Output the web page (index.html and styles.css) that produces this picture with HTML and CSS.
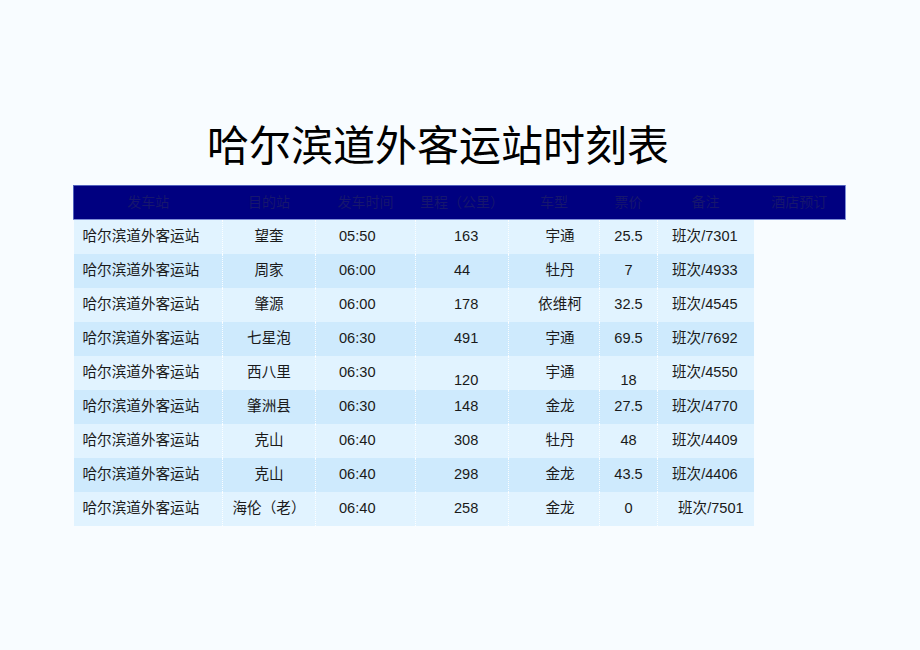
FILE: index.html
```html
<!DOCTYPE html>
<html lang="zh-CN">
<head>
<meta charset="utf-8">
<title>哈尔滨道外客运站时刻表</title>
<link rel="stylesheet" href="styles.css">
</head>
<body>
<div class="page">
  <h1 class="title">哈尔滨道外客运站时刻表</h1>
  <table class="schedule">
    <colgroup>
      <col class="c1"><col class="c2"><col class="c3"><col class="c4">
      <col class="c5"><col class="c6"><col class="c7"><col class="c8">
    </colgroup>
    <thead>
      <tr class="head">
        <th>发车站</th><th>目的站</th><th>发车时间</th><th>里程（公里）</th>
        <th>车型</th><th>票价</th><th>备注</th><th>酒店预订</th>
      </tr>
    </thead>
    <tbody>
      <tr class="odd"><td class="from">哈尔滨道外客运站</td><td class="to">望奎</td><td class="time">05:50</td><td class="km">163</td><td class="bus">宇通</td><td class="price">25.5</td><td class="note">班次/7301</td><td class="blank"></td></tr>
      <tr class="even"><td class="from">哈尔滨道外客运站</td><td class="to">周家</td><td class="time">06:00</td><td class="km">44</td><td class="bus">牡丹</td><td class="price">7</td><td class="note">班次/4933</td><td class="blank"></td></tr>
      <tr class="odd"><td class="from">哈尔滨道外客运站</td><td class="to">肇源</td><td class="time">06:00</td><td class="km">178</td><td class="bus">依维柯</td><td class="price">32.5</td><td class="note">班次/4545</td><td class="blank"></td></tr>
      <tr class="even"><td class="from">哈尔滨道外客运站</td><td class="to">七星泡</td><td class="time">06:30</td><td class="km">491</td><td class="bus">宇通</td><td class="price">69.5</td><td class="note">班次/7692</td><td class="blank"></td></tr>
      <tr class="odd"><td class="from">哈尔滨道外客运站</td><td class="to">西八里</td><td class="time">06:30</td><td class="km low">120</td><td class="bus">宇通</td><td class="price low">18</td><td class="note">班次/4550</td><td class="blank"></td></tr>
      <tr class="even"><td class="from">哈尔滨道外客运站</td><td class="to">肇洲县</td><td class="time">06:30</td><td class="km">148</td><td class="bus">金龙</td><td class="price">27.5</td><td class="note">班次/4770</td><td class="blank"></td></tr>
      <tr class="odd"><td class="from">哈尔滨道外客运站</td><td class="to">克山</td><td class="time">06:40</td><td class="km">308</td><td class="bus">牡丹</td><td class="price">48</td><td class="note">班次/4409</td><td class="blank"></td></tr>
      <tr class="even"><td class="from">哈尔滨道外客运站</td><td class="to">克山</td><td class="time">06:40</td><td class="km">298</td><td class="bus">金龙</td><td class="price">43.5</td><td class="note">班次/4406</td><td class="blank"></td></tr>
      <tr class="odd"><td class="from">哈尔滨道外客运站</td><td class="to">海伦（老）</td><td class="time">06:40</td><td class="km">258</td><td class="bus">金龙</td><td class="price">0</td><td class="note shift">班次/7501</td><td class="blank"></td></tr>
    </tbody>
  </table>
</div>
</body>
</html>
```
FILE: styles.css
```css
html, body {
  margin: 0;
  padding: 0;
  background: #f8fcff;
}
body {
  width: 920px;
  height: 650px;
  overflow: hidden;
  font-family: "Liberation Sans", "Noto Sans CJK SC", sans-serif;
  color: #1a1a1a;
}
.page {
  padding: 118px 0 0 73px;
}
.title {
  margin: 0 0 17px 134px;
  height: 50px;
  line-height: 50px;
  font-size: 42px;
  font-weight: normal;
  font-family: "Noto Sans CJK SC", sans-serif;
  color: #000;
}
.schedule {
  border-collapse: collapse;
  table-layout: fixed;
  width: 772px;
}
.c1 { width: 149px; }
.c2 { width: 93px; }
.c3 { width: 100px; }
.c4 { width: 93px; }
.c5 { width: 91px; }
.c6 { width: 58px; }
.c7 { width: 96px; }
.c8 { width: 92px; }

.head th {
  height: 33px;
  padding: 0;
  background: #000080;
  color: #16166e;
  font-family: "Liberation Serif", "Noto Sans CJK SC", serif;
  font-weight: normal;
  font-size: 14px;
  line-height: 18px;
  text-align: center;
  border-top: 1px solid #5262bd;
  border-bottom: 1px solid #7f8fd6;
}
.head th:first-child { border-left: 1px solid #5262bd; }
.head th:last-child { border-right: 1px solid #7f8fd6; }

tbody tr { height: 34px; }
tbody td {
  height: 34px;
  box-sizing: border-box;
  padding: 0 0 2px 0;
  font-size: 14.6px;
  line-height: 18px;
  white-space: nowrap;
  border-right: 1px dotted rgba(255, 255, 255, 0.9);
  vertical-align: middle;
}
tbody tr.odd td { background: #e1f3ff; }
tbody tr.even td { background: #ceeafd; }
tbody tr td.blank {
  background: transparent;
  border: none;
}
tbody td.note { border-right: none; }

tbody td.time,
tbody td.km,
tbody td.price { padding-bottom: 1px; }

td.from { padding-left: 9px; }
td.to { text-align: center; }
td.time { padding-left: 23px; }
td.km { padding-left: 38px; }
td.bus { text-align: center; padding-left: 12px; }
td.price { text-align: center; }
td.note { padding-left: 14px; }
td.note.shift { padding-left: 20px; }
tbody td.low {
  vertical-align: bottom;
  padding-bottom: 1px;
}
```
